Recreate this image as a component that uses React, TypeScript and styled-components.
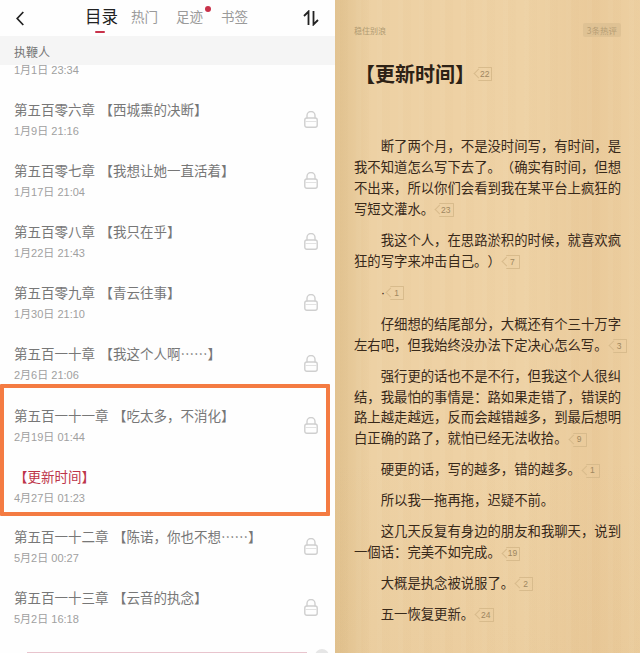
import React from 'react';
import styled, { createGlobalStyle } from 'styled-components';

const GlobalStyle = createGlobalStyle`
  html, body {
    margin: 0;
    padding: 0;
    background: #fff;
  }
  body {
    font-family: "Liberation Sans", "Noto Sans CJK SC", sans-serif;
    text-spacing-trim: space-all;
  }
`;

const cjkStack = '"Noto Sans CJK SC", "Liberation Sans", sans-serif';

const Page = styled.div`
  display: flex;
  width: 640px;
  height: 653px;
  overflow: hidden;
`;

const CatalogPanel = styled.section`
  display: flex;
  flex-direction: column;
  width: 335px;
  flex: none;
  background: #fefefe;
  overflow: hidden;
`;

const TopBar = styled.header`
  display: flex;
  align-items: center;
  height: 36px;
  flex: none;
  padding: 0 16px;
  box-sizing: border-box;
`;

const BackButton = styled.button`
  display: flex;
  border: 0;
  padding: 0;
  background: none;
`;

const Tabs = styled.nav`
  display: flex;
  align-items: flex-start;
  gap: 18px;
  margin-left: 61px;
  flex: 1;
`;

const Tab = styled.span<{ $active?: boolean; $dot?: boolean }>`
  position: relative;
  font-family: ${cjkStack};
  font-size: ${(p) => (p.$active ? '16.5px' : '13.5px')};
  line-height: 33px;
  height: 36px;
  color: ${(p) => (p.$active ? '#222' : '#9a9a9a')};
  margin-right: ${(p) => (p.$active ? '-5px' : '0')};

  ${(p) =>
    p.$active &&
    `
    &::after {
      content: '';
      position: absolute;
      left: 10px;
      bottom: 3px;
      width: 10px;
      height: 2px;
      border-radius: 1px;
      background: #c8324a;
    }
  `}

  ${(p) =>
    p.$dot &&
    `
    &::after {
      content: '';
      position: absolute;
      right: -8px;
      top: 6px;
      width: 6px;
      height: 6px;
      border-radius: 50%;
      background: #c8324a;
    }
  `}
`;

const VolumeBar = styled.div`
  height: 29px;
  flex: none;
  padding-left: 14px;
  background: #f5f5f5;
  color: #777;
  font-family: ${cjkStack};
  font-size: 12px;
  line-height: 32px;
`;

const PartialDate = styled.div`
  height: 14px;
  flex: none;
  padding-left: 14px;
  font-size: 11px;
  line-height: 11px;
  color: #a0a0a0;
`;

const ChapterList = styled.div`
  display: flex;
  flex-direction: column;
  padding-top: 10px;
  flex: 1;
`;

const ChapterRow = styled.div`
  display: flex;
  align-items: center;
  justify-content: space-between;
  height: 61px;
  flex: none;
  box-sizing: border-box;
  padding: 0 17px 0 14px;
`;

const ChapterText = styled.div`
  display: flex;
  flex-direction: column;
  gap: 5px;
  padding-bottom: 1px;
`;

const ChapterTitle = styled.div<{ $hot?: boolean }>`
  font-family: ${cjkStack};
  font-size: 13.5px;
  line-height: 19px;
  white-space: pre;
  word-spacing: 1.5px;
  color: ${(p) => (p.$hot ? '#bd3449' : '#777')};
`;

const ChapterDate = styled.div`
  font-size: 11px;
  line-height: 14px;
  color: #a0a0a0;
`;

const HighlightFrame = styled.div`
  display: flex;
  flex-direction: column;
  gap: 11px;
  flex: none;
  width: 330px;
  height: 132px;
  margin-top: -10px;
  padding-top: 12px;
  box-sizing: border-box;
  border: 4px solid #f47b42;
  border-radius: 1px;

  ${ChapterRow} {
    height: 50px;
    padding: 0 8px 0 10px;
  }
`;

const Footer = styled.div`
  display: flex;
  align-items: flex-start;
  gap: 8px;
  height: 4px;
  flex: none;
  margin-top: auto;
  padding: 0 6px 0 27px;
`;

const FooterBar = styled.div`
  flex: 1;
  height: 2px;
  margin-top: 3px;
  background: #e8c4cd;
`;

const FooterDot = styled.div`
  width: 14px;
  height: 14px;
  flex: none;
  border-radius: 50%;
  background: #e6e6e6;
`;

const ReaderPanel = styled.section`
  flex: 1;
  box-sizing: border-box;
  padding: 23px 19px 0;
  color: #38291a;
  font-family: ${cjkStack};
  background:
    repeating-linear-gradient(
      90deg,
      rgba(255, 255, 255, 0.018) 0 5px,
      rgba(170, 120, 50, 0.014) 5px 13px,
      rgba(255, 255, 255, 0) 13px 21px
    ),
    linear-gradient(180deg, rgba(255, 255, 255, 0) 70%, rgba(190, 140, 70, 0.05) 100%),
    linear-gradient(
      90deg,
      #e1c28f 0%,
      #edd1a4 12%,
      #eed1a4 40%,
      #eed2a5 62%,
      #eaca9a 85%,
      #edd0a2 100%
    );
`;

const ReaderMeta = styled.div`
  display: flex;
  align-items: center;
  justify-content: space-between;
  height: 14px;
  font-size: 8px;
  color: #b09a72;
`;

const HotBadge = styled.span`
  padding: 0 4px;
  height: 14px;
  line-height: 14px;
  font-size: 8.5px;
  border-radius: 2px;
  background: #dfc294;
  color: #b79e74;
`;

const Paragraph = styled.p`
  margin: 0 0 10px;
  font-size: 13.35px;
  line-height: 20.95px;
  text-indent: 2em;
  text-align: justify;
`;

const SmallDot = styled.span`
  font-family: "Liberation Sans", sans-serif;
`;

const CommentTag = styled.span<{ $overhang?: boolean }>`
  position: relative;
  display: inline-flex;
  align-items: center;
  justify-content: center;
  height: 14px;
  min-width: 14px;
  margin-left: 5px;
  margin-right: ${(p) => (p.$overhang ? '-8px' : '0')};
  padding: 0 2px;
  box-sizing: border-box;
  border: 1px solid #d8bb8c;
  border-left: 0;
  border-radius: 1px;
  font-family: "Liberation Sans", sans-serif;
  font-size: 8.5px;
  line-height: 1;
  text-indent: 0;
  color: #9f8760;
  font-weight: 400;
  vertical-align: 1px;

  &::before {
    content: '';
    position: absolute;
    left: -3px;
    top: 2px;
    width: 7px;
    height: 7px;
    box-sizing: border-box;
    border-left: 1px solid #d8bb8c;
    border-bottom: 1px solid #d8bb8c;
    transform: rotate(45deg);
  }
`;

const ChapterHeading = styled.h1`
  display: flex;
  align-items: center;
  margin: 23px 0 48px 1px;
  font-size: 20px;
  line-height: 28px;
  font-weight: 700;
  color: #2d2115;

  ${CommentTag} {
    margin-left: 3px;
  }
`;

const chapters = [
  ['第五百零六章 【西城熏的决断】', '1月9日 21:16'],
  ['第五百零七章 【我想让她一直活着】', '1月17日 21:04'],
  ['第五百零八章 【我只在乎】', '1月22日 21:43'],
  ['第五百零九章 【青云往事】', '1月30日 21:10'],
  ['第五百一十章 【我这个人啊……】', '2月6日 21:06'],
];

const laterChapters = [
  ['第五百一十二章 【陈诺，你也不想……】', '5月2日 00:27'],
  ['第五百一十三章 【云音的执念】', '5月2日 16:18'],
];

const LockIcon = () => (
  <svg width="14" height="17" viewBox="0 0 14 17" fill="none" stroke="#cfcfcf" strokeWidth="1.4">
    <path d="M3 7.5V4.5a4 4 0 0 1 8 0v3" />
    <rect x="0.8" y="7" width="12.4" height="9.3" rx="2" />
    <path d="M1 10.5h12" stroke="#e2e2e2" strokeWidth="1" />
  </svg>
);

const BackIcon = () => (
  <svg width="8" height="15" viewBox="0 0 8 15" fill="none" stroke="#222" strokeWidth="1.7">
    <path d="M7.3 1 1.2 7.5 7.3 14" />
  </svg>
);

const SortIcon = () => (
  <svg width="16" height="16" viewBox="0 0 16 16" fill="none" stroke="#222" strokeWidth="1.8">
    <path d="M5.5 15V1.5L1 6" />
    <path d="M10.5 1v13.5L15 10" />
  </svg>
);

const Row = ({ title, date, hot }: { title: string; date: string; hot?: boolean }) => (
  <ChapterRow>
    <ChapterText>
      <ChapterTitle $hot={hot}>{title}</ChapterTitle>
      <ChapterDate>{date}</ChapterDate>
    </ChapterText>
    {!hot && <LockIcon />}
  </ChapterRow>
);

const App = () => {
  return (
    <Page>
      <GlobalStyle />
      <CatalogPanel>
        <TopBar>
          <BackButton>
            <BackIcon />
          </BackButton>
          <Tabs>
            <Tab $active>目录</Tab>
            <Tab>热门</Tab>
            <Tab $dot>足迹</Tab>
            <Tab>书签</Tab>
          </Tabs>
          <SortIcon />
        </TopBar>
        <VolumeBar>执鞭人</VolumeBar>
        <PartialDate>1月1日 23:34</PartialDate>
        <ChapterList>
          {chapters.map(([title, date]) => (
            <Row key={title} title={title} date={date} />
          ))}
          <HighlightFrame>
            <Row title="第五百一十一章 【吃太多，不消化】" date="2月19日 01:44" />
            <Row title="【更新时间】" date="4月27日 01:23" hot />
          </HighlightFrame>
          {laterChapters.map(([title, date]) => (
            <Row key={title} title={title} date={date} />
          ))}
          <Footer>
            <FooterBar />
            <FooterDot />
          </Footer>
        </ChapterList>
      </CatalogPanel>
      <ReaderPanel>
        <ReaderMeta>
          <span>稳住别浪</span>
          <HotBadge>3条热评</HotBadge>
        </ReaderMeta>
        <ChapterHeading>
          【更新时间】
          <CommentTag>22</CommentTag>
        </ChapterHeading>
        <Paragraph>
          断了两个月，不是没时间写，有时间，是我不知道怎么写下去了。（确实有时间，但想不出来，所以你们会看到我在某平台上疯狂的写短文灌水。
          <CommentTag>23</CommentTag>
        </Paragraph>
        <Paragraph>
          我这个人，在思路淤积的时候，就喜欢疯狂的写字来冲击自己。）
          <CommentTag>7</CommentTag>
        </Paragraph>
        <Paragraph>
          <SmallDot>·</SmallDot>
          <CommentTag>1</CommentTag>
        </Paragraph>
        <Paragraph>
          仔细想的结尾部分，大概还有个三十万字左右吧，但我始终没办法下定决心怎么写。
          <CommentTag $overhang>3</CommentTag>
        </Paragraph>
        <Paragraph>
          强行更的话也不是不行，但我这个人很纠结，我最怕的事情是：路如果走错了，错误的路上越走越远，反而会越错越多，到最后想明白正确的路了，就怕已经无法收拾。
          <CommentTag>9</CommentTag>
        </Paragraph>
        <Paragraph>
          硬更的话，写的越多，错的越多。
          <CommentTag>1</CommentTag>
        </Paragraph>
        <Paragraph>所以我一拖再拖，迟疑不前。</Paragraph>
        <Paragraph>
          这几天反复有身边的朋友和我聊天，说到一個话：完美不如完成。
          <CommentTag>19</CommentTag>
        </Paragraph>
        <Paragraph>
          大概是执念被说服了。
          <CommentTag>2</CommentTag>
        </Paragraph>
        <Paragraph>
          五一恢复更新。
          <CommentTag>24</CommentTag>
        </Paragraph>
      </ReaderPanel>
    </Page>
  );
};

export default App;
